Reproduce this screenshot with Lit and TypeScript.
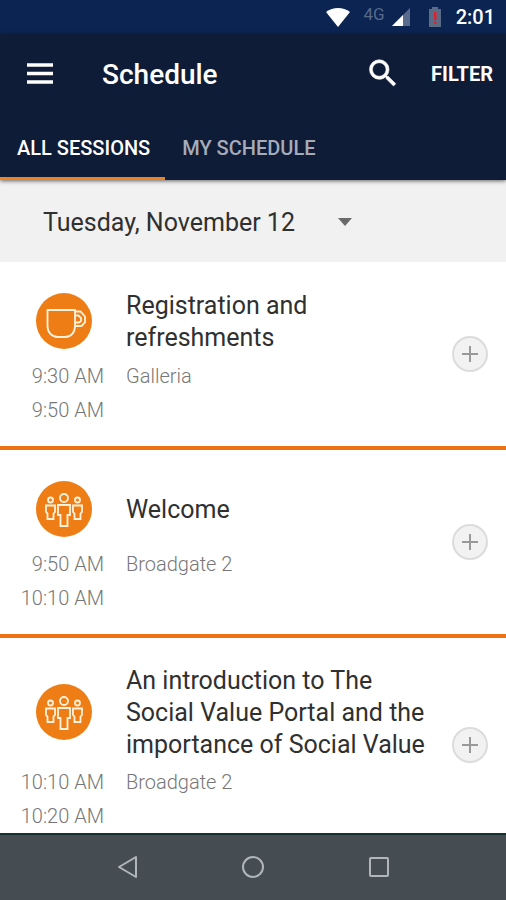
import { LitElement, html, css, svg } from "lit";
import { customElement, property, state } from "lit/decorators.js";
import { classMap } from "lit/directives/class-map.js";

type IconName = "cup" | "people";

interface Session {
  title: string;
  room: string;
  start: string;
  end: string;
  icon: IconName;
}

const SESSIONS: Session[] = [
  { title: "Registration and refreshments", room: "Galleria", start: "9:30 AM", end: "9:50 AM", icon: "cup" },
  { title: "Welcome", room: "Broadgate 2", start: "9:50 AM", end: "10:10 AM", icon: "people" },
  {
    title: "An introduction to The Social Value Portal and the importance of Social Value",
    room: "Broadgate 2",
    start: "10:10 AM",
    end: "10:20 AM",
    icon: "people",
  },
];

const glyphs = {
  cup: svg`
    <path d="M11.500 17H39V33c0 6.500-4 11-9.500 11H21.500C16 44 11.500 39.500 11.500 33z" />
    <path d="M39 18.500h5.500l4.500 5v6L45.500 33H39" />
    <path d="M39 22.500h3.500l2.500 2.500v3l-2 1.500H39" />`,
  people: svg`
    <circle cx="28" cy="17" r="4" />
    <path d="M22 24h12v10h-2.500V45h-7V34h-2.500z" />
    <circle cx="14.500" cy="19" r="2.500" />
    <path d="M10 24.500h9v6.500l-1.500 1.500V38h-6v-5.500l-1.500-1.500z" />
    <circle cx="41.500" cy="19" r="2.500" />
    <path d="M37 24.500h9v6.500l-1.500 1.500V38h-6v-5.500l-1.500-1.500z" />`,
};

@customElement("session-row")
export class SessionRow extends LitElement {
  @property({ attribute: false }) session!: Session;

  static styles = css`
    :host {
      display: grid;
      grid-template-columns: 104px 1fr 36px;
      column-gap: 22px;
      grid-template-rows: auto auto;
      row-gap: 4px;
      padding: 25px 18px 19px 0;
      background: #fff;
      border-bottom: 4px solid #ee7214;
    }
    .badge {
      align-self: center;
      justify-self: end;
      margin-right: 12px;
      width: 56px;
      height: 56px;
      border-radius: 50%;
      background: #ef7d15;
    }
    .badge svg {
      display: block;
      width: 56px;
      height: 56px;
      fill: none;
      stroke: #fff2dc;
      stroke-width: 1.800;
    }
    .title {
      display: flex;
      align-items: center;
      box-sizing: border-box;
      min-height: 68px;
      margin: 0;
      padding-top: 2px;
      font-size: 25px;
      line-height: 32px;
      font-weight: 400;
      color: #303030;
    }
    .times,
    .room {
      margin: 0;
      font-size: 20px;
      line-height: 34px;
      font-weight: 300;
      color: #777;
    }
    .times {
      display: flex;
      flex-direction: column;
      text-align: right;
    }
    .add {
      grid-column: 3;
      grid-row: 1 / 3;
      align-self: center;
      width: 36px;
      height: 36px;
      margin-bottom: 6px;
      padding: 0;
      border: 2px solid #dcdcdc;
      border-radius: 50%;
      background: #f2f2f2;
    }
    .add svg {
      display: block;
      width: 32px;
      height: 32px;
      stroke: #999;
      stroke-width: 2;
    }
  `;

  render() {
    const s = this.session;
    return html`
      <div class="badge"><svg viewBox="0 0 56 56" aria-hidden="true">${glyphs[s.icon]}</svg></div>
      <h2 class="title">${s.title}</h2>
      <button class="add" aria-label="Add ${s.title} to my schedule">
        <svg viewBox="0 0 32 32" aria-hidden="true"><path d="M16 8v16M8 16h16" /></svg>
      </button>
      <div class="times"><time>${s.start}</time><time>${s.end}</time></div>
      <p class="room">${s.room}</p>
    `;
  }
}

@customElement("app-root")
export class AppRoot extends LitElement {
  @state() private tab = 0;

  static styles = css`
    :host {
      display: flex;
      flex-direction: column;
      height: 100vh;
      overflow: hidden;
      background: #fff;
      font-family: Roboto, "Noto Sans", sans-serif;
    }
    button {
      padding: 0;
      border: 0;
      background: none;
      font: inherit;
      color: inherit;
    }
    svg {
      display: block;
    }
    .status {
      display: flex;
      flex: none;
      align-items: center;
      justify-content: flex-end;
      height: 34px;
      padding-right: 11px;
      background: #0c2452;
      color: #fff;
      font-size: 20px;
      font-weight: 500;
    }
    .wifi {
      width: 26px;
      height: 22px;
      margin-right: 12px;
    }
    .network {
      margin-right: 6px;
      padding-bottom: 6px;
      font-size: 17px;
      line-height: 18px;
      font-weight: 400;
      color: #57698a;
    }
    .signal {
      width: 20px;
      height: 20px;
      margin-right: 17px;
    }
    .battery {
      width: 14px;
      height: 22px;
      margin-right: 14px;
    }
    .header {
      position: relative;
      flex: none;
      background: #0f1c37;
      color: #fff;
      box-shadow: 0 1px 4px rgba(0, 0, 0, 0.6);
    }
    .bar {
      display: flex;
      align-items: center;
      height: 80px;
      padding: 0 13px 0 24px;
    }
    .menu svg {
      width: 32px;
      height: 32px;
    }
    .heading {
      flex: 1;
      margin: 0 0 0 46px;
      font-size: 28px;
      font-weight: 500;
    }
    .search {
      margin-right: 30px;
    }
    .search svg {
      width: 36px;
      height: 36px;
    }
    .filter {
      font-size: 20px;
      font-weight: 700;
    }
    .tabs {
      display: flex;
      height: 66px;
    }
    .tab {
      padding: 4px 15px 0 17px;
      border-bottom: 3px solid transparent;
      font-size: 20px;
      font-weight: 500;
      color: #a6abb9;
    }
    .tab.active {
      border-bottom-color: #f08020;
      color: #fff;
    }
    .date {
      display: flex;
      flex: none;
      align-items: center;
      height: 82px;
      padding-left: 43px;
      background: #f1f1f1;
    }
    .picker {
      position: relative;
    }
    .picker select {
      width: 312px;
      height: 48px;
      margin: 0;
      padding: 2px 0 0;
      border: 0;
      appearance: none;
      background: none;
      font: inherit;
      font-size: 25px;
      color: #303030;
    }
    .picker svg {
      position: absolute;
      right: 3px;
      top: 21px;
      width: 14px;
      height: 8px;
      pointer-events: none;
    }
    .sessions {
      flex: 1;
      min-height: 0;
      overflow: auto;
      scrollbar-width: none;
    }
    .system {
      display: flex;
      flex: none;
      align-items: center;
      justify-content: center;
      gap: 98px;
      height: 65px;
      border-top: 2px solid #17302f;
      background: #454d52;
    }
    .system svg {
      width: 28px;
      height: 28px;
      fill: none;
      stroke: #b0b6b9;
      stroke-width: 2;
      stroke-linejoin: round;
    }
  `;

  render() {
    return html`
      <div class="status">
        <svg class="wifi" viewBox="0 0 26 22" aria-hidden="true">
          <path d="M1 6C8 .5 18 .5 25 6L13 21z" fill="#fff" />
        </svg>
        <span class="network">4G</span>
        <svg class="signal" viewBox="0 0 20 20" aria-hidden="true">
          <path d="M19 1v18H1z" fill="#5a6c8d" />
          <path d="M12 8v11H1z" fill="#fff" />
        </svg>
        <svg class="battery" viewBox="0 0 14 22" aria-hidden="true">
          <path d="M4 1h6v2h3v18H1V3h3z" fill="#5a6b86" />
          <path d="M6 6h2.500v8H6zM6 15.500h2.500v2.500H6z" fill="#e0202c" />
        </svg>
        <span>2:01</span>
      </div>
      <header class="header">
        <div class="bar">
          <button class="menu" aria-label="Menu">
            <svg viewBox="0 0 32 32" aria-hidden="true">
              <path d="M3 7h26M3 15.500h26M3 24h26" stroke="#fff" stroke-width="3.500" />
            </svg>
          </button>
          <h1 class="heading">Schedule</h1>
          <button class="search" aria-label="Search">
            <svg viewBox="0 0 24 24" aria-hidden="true">
              <path
                fill="#fff"
                stroke="#fff"
                stroke-width=".4"
                d="M15.500 13.500h-.79l-.28-.27A6.471 6.471 0 0 0 16 9 6.500 6.500 0 1 0 9.500 15.500c1.610 0 3.090-.59 4.230-1.570l.27.28v.79l5 4.990L20.490 18.500l-4.990-5zm-6 0C7.010 13.500 5 11.490 5 9S7.010 4.500 9.500 4.500 14 6.510 14 9 11.990 13.500 9.500 13.500z"
              />
            </svg>
          </button>
          <button class="filter">FILTER</button>
        </div>
        <div class="tabs" role="tablist">
          ${["ALL SESSIONS", "MY SCHEDULE"].map(
            (label, i) => html`
              <button
                class=${classMap({ tab: true, active: this.tab === i })}
                role="tab"
                aria-selected=${this.tab === i}
                @click=${() => (this.tab = i)}
              >
                ${label}
              </button>
            `
          )}
        </div>
      </header>
      <div class="date">
        <div class="picker">
          <select aria-label="Date">
            <option>Tuesday, November 12</option>
          </select>
          <svg viewBox="0 0 14 8" aria-hidden="true"><path d="M0 0h14L7 8z" fill="#6a6a6a" /></svg>
        </div>
      </div>
      <main class="sessions">
        ${SESSIONS.map((s) => html`<session-row .session=${s}></session-row>`)}
      </main>
      <nav class="system">
        <button aria-label="Back">
          <svg viewBox="0 0 28 28" aria-hidden="true"><path d="M23 3v20L6 13z" /></svg>
        </button>
        <button aria-label="Home">
          <svg viewBox="0 0 28 28" aria-hidden="true"><circle cx="14" cy="13" r="10" /></svg>
        </button>
        <button aria-label="Recent apps">
          <svg viewBox="0 0 28 28" aria-hidden="true"><rect x="5" y="4" width="18" height="18" rx="1" /></svg>
        </button>
      </nav>
    `;
  }
}
